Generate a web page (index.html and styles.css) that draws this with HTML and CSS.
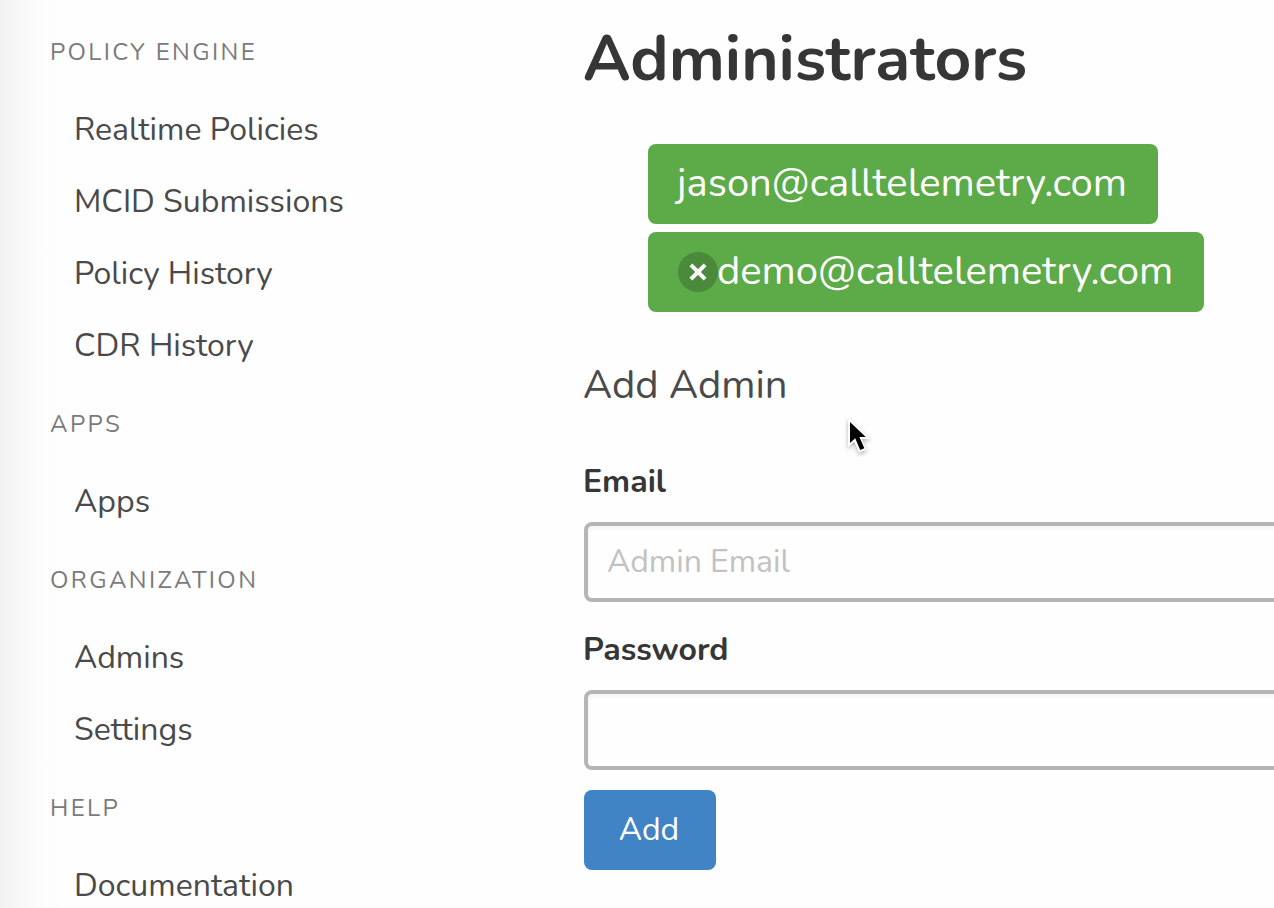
FILE: index.html
```
<!DOCTYPE html>
<html lang="en">
<head>
<meta charset="utf-8">
<title>Administrators</title>
<link rel="stylesheet" href="styles.css">
</head>
<body>
<div class="layout">
  <aside class="menu">
    <p class="menu-label">Policy Engine</p>
    <ul class="menu-list">
      <li><a>Realtime Policies</a></li>
      <li><a>MCID Submissions</a></li>
      <li><a>Policy History</a></li>
      <li><a>CDR History</a></li>
    </ul>
    <p class="menu-label">Apps</p>
    <ul class="menu-list">
      <li><a>Apps</a></li>
    </ul>
    <p class="menu-label">Organization</p>
    <ul class="menu-list">
      <li><a>Admins</a></li>
      <li><a>Settings</a></li>
    </ul>
    <p class="menu-label">Help</p>
    <ul class="menu-list">
      <li><a>Documentation</a></li>
    </ul>
  </aside>
  <main class="content">
    <h1 class="title">Administrators</h1>
    <ul class="admins">
      <li class="tag">jason@calltelemetry.com</li>
      <li class="tag"><button class="delete" type="button" aria-label="Remove"></button>demo@calltelemetry.com</li>
    </ul>
    <h2 class="subtitle">Add Admin</h2>
    <form class="form">
      <label class="label" for="email">Email</label>
      <input class="input" id="email" type="email" placeholder="Admin Email">
      <label class="label" for="password">Password</label>
      <input class="input" id="password" type="password">
      <button class="button" type="button">Add</button>
    </form>
  </main>
</div>
<svg class="pointer" width="36" height="48" viewBox="0 0 36 48">
  <path d="M8 4.5V34.2L14.2 28.6L19 39.4L26.4 36.4L21.8 26H30.2Z" fill="#fff"/>
  <path d="M10 9V30L15.2 25.2L20.2 37L24.4 35.2L19.4 24H25.8Z" fill="#000"/>
</svg>
</body>
</html>
```
FILE: styles.css
```
* {
  box-sizing: border-box;
}

body {
  margin: 0;
  height: 908px;
  overflow: hidden;
  background: #fefefe;
  color: #4a4a4a;
  font: 400 32px/1.5 Nunito, Lato, sans-serif;
}

ul {
  list-style: none;
  margin: 0;
  padding: 0;
}

.layout {
  display: flex;
  height: 908px;
  overflow: hidden;
  background: linear-gradient(to right, #f1f1f1 0, #f4f4f4 8px, #f8f8f8 18px, #fafafa 28px, #fcfcfc 38px, #fdfdfd 52px, #fefefe 72px);
}

.menu {
  flex: 0 0 584px;
  padding: 34px 0 0 50px;
}

.menu-label {
  margin: 0 0 24px;
  color: #7a7a7a;
  font-size: 24px;
  line-height: 36px;
  letter-spacing: 2.4px;
  text-transform: uppercase;
}

.menu-list + .menu-label {
  margin-top: 24px;
}

.menu-list a {
  display: block;
  padding: 16px 24px;
  line-height: 40px;
}

.content {
  flex: 0 0 900px;
  padding-top: 23px;
  text-indent: -1px;
}

.title {
  margin: 0 0 49px;
  color: #363636;
  font-size: 64px;
  font-weight: 700;
  line-height: 72px;
}

.admins {
  display: flex;
  flex-direction: column;
  align-items: flex-start;
  gap: 8px;
  margin: 0 0 48px 64px;
}

.tag {
  display: flex;
  align-items: center;
  height: 80px;
  padding: 0 31px 2px 30px;
  border-radius: 8px;
  background: #5caa48;
  color: #fff;
  font-size: 40px;
  line-height: 58px;
}

.delete {
  display: grid;
  place-items: center;
  width: 40px;
  height: 40px;
  margin-top: 2px;
  padding: 0;
  border: 0;
  border-radius: 50%;
  background: rgba(10, 10, 10, .2);
}

.delete::before,
.delete::after {
  content: "";
  grid-area: 1 / 1;
  width: 20px;
  height: 4px;
  background: #fff;
  transform: rotate(45deg);
}

.delete::after {
  transform: rotate(-45deg);
}

.subtitle {
  margin: 0 0 48px;
  font-size: 40px;
  font-weight: 400;
  line-height: 50px;
}

.form {
  display: flex;
  flex-direction: column;
  align-items: flex-start;
}

.label {
  margin-bottom: 16px;
  color: #363636;
  font-weight: 700;
}

.input {
  width: 100%;
  height: 80px;
  margin: 0 0 24px;
  padding: 0 19px 2px;
  border: 4px solid #b5b5b5;
  border-radius: 8px;
  background: #fefefe;
  box-shadow: inset 0 2px 4px rgba(10, 10, 10, .05);
  font: inherit;
}

.input::placeholder {
  color: #c2c2c2;
  opacity: 1;
}

.button {
  width: 132px;
  height: 80px;
  margin-top: -4px;
  padding: 0 2px 0 0;
  border: 0;
  border-radius: 8px;
  background: #4084c5;
  color: #fff;
  font: inherit;
}

.pointer {
  position: absolute;
  left: 840px;
  top: 413px;
  filter: drop-shadow(0 2px 2px rgba(0, 0, 0, .3));
}
```
